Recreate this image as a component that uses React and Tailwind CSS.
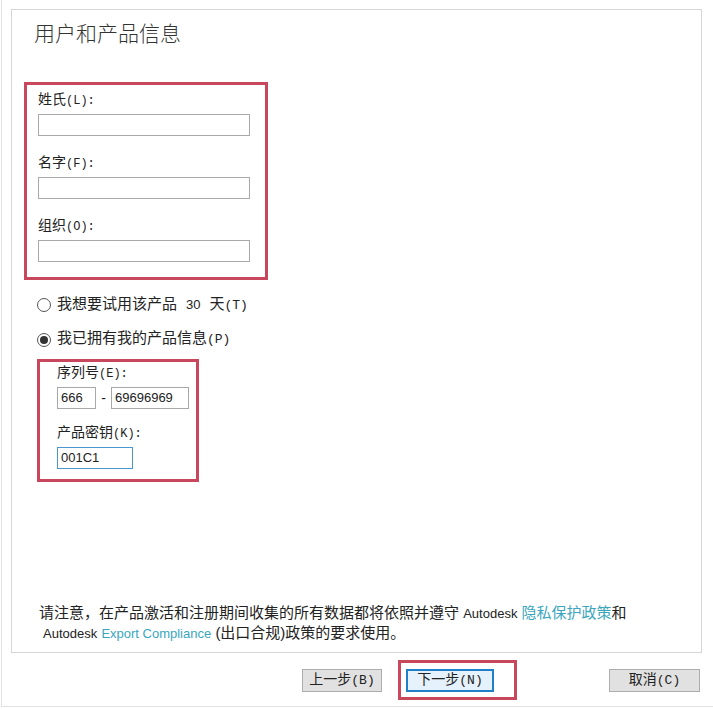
import React from 'react';

const monoLabel = { fontFamily: '"Liberation Mono", "Noto Sans CJK SC", monospace' };
const sansCjk = { fontFamily: '"Liberation Sans", "Noto Sans CJK SC", sans-serif' };

// CJK text followed by a SimSun-like latin hotkey part such as "(L):"
const Label = ({ cjk, key_, keySize = 'text-[12px]' }) => (
  <>
    {cjk}
    <span className={keySize}>{key_}</span>
  </>
);

const Field = ({ cjk, hotkey, first = false }) => (
  <div className={first ? '' : 'mt-[17px]'}>
    <div className="ml-[11px] h-[20px] leading-[20px] text-[14px] text-[#222]" style={monoLabel}>
      <Label cjk={cjk} key_={hotkey} />
    </div>
    <div className="ml-[11px] mt-[4px] w-[212px] h-[22px] border border-[#a8a8a8] bg-white" />
  </div>
);

const Radio = ({ checked, children }) => (
  <div className="flex items-center h-[20px] ml-[25px]">
    <span className="w-[14px] h-[14px] rounded-full border border-[#555] bg-white flex items-center justify-center">
      {checked && <span className="w-[8px] h-[8px] rounded-full bg-[#333]" />}
    </span>
    <span className="ml-[6px] text-[15px] leading-[20px] text-[#222]" style={monoLabel}>
      {children}
    </span>
  </div>
);

const TextBox = ({ value, width, focused = false }) => (
  <div
    className={`h-[22px] border bg-white px-[3px] text-[13px] leading-[20px] text-[#222] ${
      focused ? 'border-[#4a97d0]' : 'border-[#a8a8a8]'
    } ${width}`}
    style={sansCjk}
  >
    {value}
  </div>
);

const Button = ({ children, primary = false, className = '' }) => (
  <div
    className={`h-[23px] flex items-center justify-center text-[14px] text-[#222] ${
      primary ? 'border-2 border-[#1f7fc8] bg-[#e5f1fb]' : 'border border-[#adadad] bg-[#e1e1e1]'
    } ${className}`}
    style={monoLabel}
  >
    {children}
  </div>
);

export default function App() {
  return (
    <div className="w-[713px] h-[709px] bg-white">
      <div className="ml-px w-[712px] h-[707px] border-l border-b border-[#e2e2e2] flex flex-col">
        <div className="ml-[9px] mt-[9px] w-[691px] h-[644px] border border-[#d6d6d6] bg-white flex flex-col">
          <div
            className="mt-[10px] ml-[22px] h-[28px] leading-[28px] text-[21px] font-light text-[#333]"
            style={sansCjk}
          >
            用户和产品信息
          </div>

          <div className="ml-[12px] mt-[34px] w-[244px] h-[198px] border-[3px] border-[#c8475c] pt-[5px]">
            <Field cjk="姓氏" hotkey="(L):" first />
            <Field cjk="名字" hotkey="(F):" />
            <Field cjk="组织" hotkey="(O):" />
          </div>

          <div className="mt-[15px]">
            <Radio>
              我想要试用该产品 <span className="text-[13px]" style={sansCjk}>30</span> 天
              <span className="text-[13px]">(T)</span>
            </Radio>
          </div>
          <div className="mt-[15px]">
            <Radio checked>
              我已拥有我的产品信息<span className="text-[13px]">(P)</span>
            </Radio>
          </div>

          <div className="ml-[25px] mt-[9px] w-[162px] h-[123px] border-[3px] border-[#c8475c] pt-px pl-[17px]">
            <div className="h-[20px] leading-[20px] text-[14px] text-[#222]" style={monoLabel}>
              <Label cjk="序列号" key_="(E):" />
            </div>
            <div className="mt-[4px] flex items-center">
              <TextBox value="666" width="w-[39px]" />
              <span className="w-[15px] text-center text-[14px] text-[#222]" style={sansCjk}>
                -
              </span>
              <TextBox value="69696969" width="w-[78px]" />
            </div>
            <div className="mt-[14px] h-[20px] leading-[20px] text-[14px] text-[#222]" style={monoLabel}>
              <Label cjk="产品密钥" key_="(K):" />
            </div>
            <div className="mt-[4px]">
              <TextBox value="001C1" width="w-[76px]" focused />
            </div>
          </div>

          <div className="mt-auto mb-[9px] text-[15px] leading-[19px] text-[#222]" style={sansCjk}>
            <div className="ml-[27px]">
              请注意，在产品激活和注册期间收集的所有数据都将依照并遵守{' '}
              <span className="text-[13px]">Autodesk</span>{' '}
              <span className="text-[#3aa6bd]">隐私保护政策</span>和
            </div>
            <div className="ml-[31px]">
              <span className="text-[13px]">Autodesk</span>{' '}
              <span className="text-[13px] text-[#3aa6bd]">Export Compliance</span>{' '}
              (出口合规)政策的要求使用。
            </div>
          </div>
        </div>

        <div className="flex items-start">
          <Button className="ml-[300px] mt-[16px] w-[80px]">
            <Label cjk="上一步" key_="(B)" keySize="text-[13px]" />
          </Button>
          <div className="ml-[16px] mt-[7px] w-[119px] h-[40px] border-[3px] border-[#c8475c] pt-[6px] pl-[5px]">
            <Button primary className="w-[88px]">
              <Label cjk="下一步" key_="(N)" keySize="text-[13px]" />
            </Button>
          </div>
          <Button className="ml-[92px] mt-[16px] w-[91px]">
            <Label cjk="取消" key_="(C)" keySize="text-[13px]" />
          </Button>
        </div>
      </div>
    </div>
  );
}
